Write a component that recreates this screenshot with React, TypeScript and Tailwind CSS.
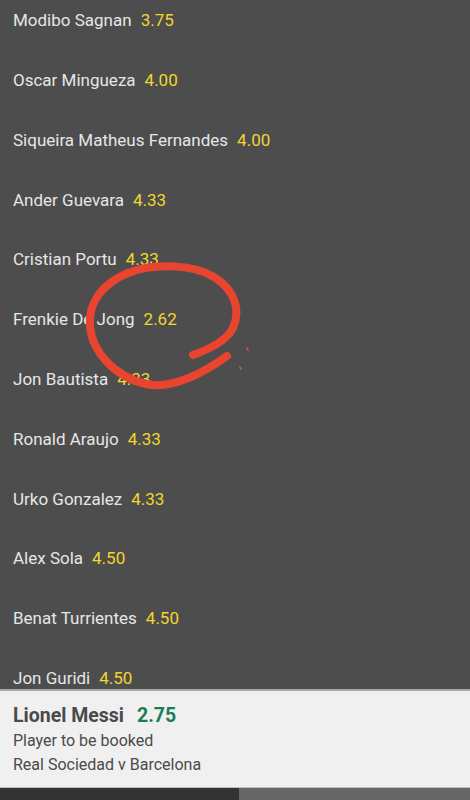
import React from 'react';

const rows = [
  { name: 'Modibo Sagnan', odds: '3.75' },
  { name: 'Oscar Mingueza', odds: '4.00' },
  { name: 'Siqueira Matheus Fernandes', odds: '4.00' },
  { name: 'Ander Guevara', odds: '4.33' },
  { name: 'Cristian Portu', odds: '4.33' },
  { name: 'Frenkie De Jong', odds: '2.62' },
  { name: 'Jon Bautista', odds: '4.33' },
  { name: 'Ronald Araujo', odds: '4.33' },
  { name: 'Urko Gonzalez', odds: '4.33' },
  { name: 'Alex Sola', odds: '4.50' },
  { name: 'Benat Turrientes', odds: '4.50' },
  { name: 'Jon Guridi', odds: '4.50' },
];

const App: React.FC = () => {
  return (
    <div className="relative w-[470px] h-[800px] overflow-hidden bg-[#4d4d4d] font-['Roboto',sans-serif]">
      {/* market list */}
      <div className="h-[689px] overflow-hidden">
        <div className="-mt-[9px]">
          {rows.map((row, index) => (
            <div key={index} className="h-[59.8px] flex items-center gap-[9px] px-[13px] text-[17px]">
              <span className="text-[#e6e6e6]">{row.name}</span>
              <span className="text-[#f2d62e]">{row.odds}</span>
            </div>
          ))}
        </div>
      </div>

      {/* selected bet */}
      <div className="h-[98px] bg-[#f0f0f0] border-t-2 border-[#a8a8a8] px-[13px] pt-[12px] text-[#4a4a4a]">
        <div className="flex items-center gap-[13px] text-[19.5px] leading-[26px] font-bold">
          <span>Lionel Messi</span>
          <span className="text-[#1d7d52]">2.75</span>
        </div>
        <div className="text-[16px] leading-[24px]">Player to be booked</div>
        <div className="text-[16px] leading-[24px]">Real Sociedad v Barcelona</div>
      </div>

      {/* bottom bar */}
      <div className="flex h-[13px] border-t border-[#bdbdbd]">
        <div className="w-[239px] bg-[#333333]" />
        <div className="flex-1 bg-[#666666]" />
      </div>

      {/* hand-drawn annotation */}
      <svg className="absolute inset-0 pointer-events-none" width="470" height="800">
        <path
          d="M 227 356 C 205 372, 172 390, 146 384 C 115 377, 92 352, 90 326 C 88 301, 104 283, 128 273 C 153 263, 193 264, 214 277 C 235 290, 241 310, 233 328 C 226 342, 207 350, 193 355"
          fill="none"
          stroke="#e8442f"
          strokeWidth="8"
          strokeLinecap="round"
        />
        <path d="M 247 348 L 248 350" stroke="#d4603a" strokeWidth="1.5" strokeLinecap="round" />
        <path d="M 240 367 L 241 369" stroke="#d4603a" strokeWidth="1.5" strokeLinecap="round" />
      </svg>
    </div>
  );
};

export default App;
